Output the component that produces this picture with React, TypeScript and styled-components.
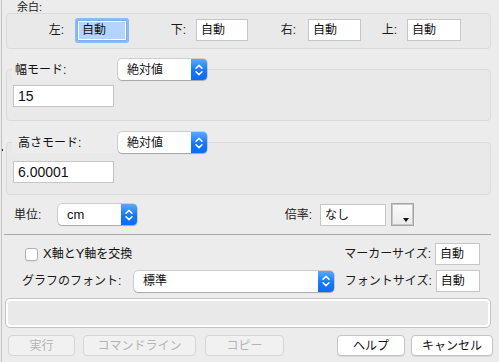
import React from 'react';
import styled, { createGlobalStyle } from 'styled-components';

const GlobalStyle = createGlobalStyle`
  html, body {
    margin: 0;
    padding: 0;
    background: #ececec;
  }
  body {
    font-family: "Liberation Sans", "Noto Sans CJK JP", sans-serif;
    font-size: 12px;
    color: #111;
  }
  * { box-sizing: border-box; }
`;

const Window = styled.div`
  position: relative;
  width: 498px;
  height: 362px;
  margin-left: 1px;
  border-left: 1px solid #c2c2c2;
  background: #ececec;
  display: flex;
  flex-direction: column;
  overflow: hidden;
`;

const EdgeMark = styled.span`
  position: absolute;
  left: -2px;
  top: 149px;
  width: 3px;
  height: 2px;
  background: #222;
`;

const SectionTitle = styled.div`
  height: 13px;
  line-height: 14px;
  padding-left: 15px;
  font-size: 11px;
  color: #222;
`;

const GroupBox = styled.div<{ $top: number; $padTop: number; $padBottom: number }>`
  margin: ${p => p.$top}px 8px 0 4px;
  padding: ${p => p.$padTop}px 6px ${p => p.$padBottom}px 0;
  border: 1px solid #dadada;
  border-radius: 4px;
  background: #e9e9e9;
`;

const MarginRow = styled.div`
  display: flex;
  align-items: center;
  height: 22px;
`;

const FieldLabel = styled.span<{ $w: number; $gap?: number; $align?: string }>`
  display: inline-block;
  width: ${p => p.$w}px;
  margin-right: ${p => p.$gap ?? 11}px;
  text-align: ${p => p.$align ?? 'right'};
  line-height: 16px;
  white-space: nowrap;
  color: #1a1a1a;
`;

const TextInput = styled.div<{ $w: number; $size?: number }>`
  width: ${p => p.$w}px;
  height: 22px;
  background: #fff;
  border: 1px solid #c6c6c6;
  padding-left: 4px;
  display: flex;
  align-items: center;
  font-size: ${p => p.$size ?? 12}px;
  line-height: 16px;
  color: #111;
  white-space: nowrap;
`;

const FocusInput = styled.div`
  width: 50px;
  height: 21px;
  margin-left: 1px;
  border: 1px solid #7aaef0;
  box-shadow: 0 0 0 2px #8cbaf3;
  border-radius: 1px;
  background: #fff;
  padding: 1px;
  display: flex;
`;

const Selection = styled.span`
  flex: 1;
  background: #b3d4fc;
  padding-left: 3px;
  display: flex;
  align-items: center;
  line-height: 16px;
`;

const Header = styled.div`
  display: flex;
  align-items: center;
  height: 21px;
  margin-top: -11px;
  position: relative;
`;

const Legend = styled.span<{ $pad: number }>`
  display: flex;
  align-items: center;
  height: 21px;
  width: 106px;
  margin-left: 5px;
  padding-left: ${p => p.$pad}px;
  background: #ececec;
  line-height: 16px;
`;

const InputHolder = styled.div<{ $top: number }>`
  margin: ${p => p.$top}px 0 0 6px;
`;

const SelectBox = styled.div<{ $w: number }>`
  width: ${p => p.$w}px;
  height: 21px;
  display: flex;
  border-radius: 4px;
  background: #fff;
  box-shadow: 0 0 0 0.5px rgba(0, 0, 0, 0.25), 0 1px 1px rgba(0, 0, 0, 0.18);
`;

const SelectText = styled.span<{ $size?: number }>`
  flex: 1;
  padding-left: 9px;
  display: flex;
  align-items: center;
  font-size: ${p => p.$size ?? 12}px;
  line-height: 16px;
  color: #111;
`;

const Stepper = styled.span`
  width: 16px;
  border-radius: 0 4px 4px 0;
  background: linear-gradient(#5aa9ff, #1478fb 55%, #0b6cf7);
  display: flex;
  align-items: center;
  justify-content: center;
`;

const Row = styled.div<{ $top: number; $h: number; $left?: number; $right?: number }>`
  display: flex;
  align-items: center;
  height: ${p => p.$h}px;
  margin-top: ${p => p.$top}px;
  padding-left: ${p => p.$left ?? 0}px;
  padding-right: ${p => p.$right ?? 0}px;
`;

const ColorButton = styled.div`
  width: 23px;
  height: 23px;
  margin-left: 5px;
  border: 1px solid #a5a5a5;
  box-shadow: inset 0 0 0 1px #c8c8c8;
  background: linear-gradient(#fbfbfb, #ebebeb);
  display: flex;
  align-items: flex-end;
  justify-content: flex-end;
  padding: 0 4px 3px 0;
  line-height: 0;
`;

const Separator = styled.div`
  height: 1px;
  margin: 8px 8px 0 2px;
  background: #a8a8a8;
`;

const Left = styled.div`
  display: flex;
  align-items: center;
  flex: 1;
`;

const CheckBox = styled.span`
  width: 13px;
  height: 13px;
  border: 1px solid #b2b2b2;
  border-radius: 3px;
  background: #fff;
  box-shadow: 0 1px 1px rgba(0, 0, 0, 0.06);
  margin-right: 5px;
`;

const PlainText = styled.span`
  line-height: 16px;
  white-space: nowrap;
  color: #111;
`;

const Latin = styled.span`
  font-size: 13px;
`;

const StatusBox = styled.div`
  height: 30px;
  margin: 6px 8px 0 3px;
  border: 1px solid #c4c4c4;
  border-radius: 5px;
  box-shadow: inset 0 0 0 2px #fff;
  background: #e9e9e9;
`;

const ButtonBar = styled.div`
  display: flex;
  align-items: center;
  height: 21px;
  margin: 7px 6px 0 6px;
`;

const Spacer = styled.div`
  flex: 1;
`;

const PushButton = styled.button<{ $w: number; $gap?: number; $disabled?: boolean }>`
  width: ${p => p.$w}px;
  height: 21px;
  margin-left: ${p => p.$gap ?? 0}px;
  padding: 0;
  border-radius: 4px;
  font-family: inherit;
  font-size: 12px;
  line-height: 16px;
  border: 1px solid ${p => (p.$disabled ? '#d6d6d6' : '#c3c3c3')};
  background: ${p => (p.$disabled ? '#f1f1f1' : '#fff')};
  color: ${p => (p.$disabled ? '#b4b4b4' : '#111')};
  box-shadow: ${p => (p.$disabled ? 'none' : '0 1px 0 rgba(0,0,0,0.08)')};
`;

const Chevrons = () => (
  <svg width="10" height="14" viewBox="0 0 10 14">
    <path d="M2 5.2 L5 2.4 L8 5.2" fill="none" stroke="#fff" strokeWidth="1.5" strokeLinecap="round" strokeLinejoin="round" />
    <path d="M2 8.8 L5 11.6 L8 8.8" fill="none" stroke="#fff" strokeWidth="1.5" strokeLinecap="round" strokeLinejoin="round" />
  </svg>
);

const Select: React.FC<{ w: number; value: string; size?: number }> = ({ w, value, size }) => (
  <SelectBox $w={w}>
    <SelectText $size={size}>{value}</SelectText>
    <Stepper>
      <Chevrons />
    </Stepper>
  </SelectBox>
);

const DownTriangle = () => (
  <svg width="6" height="4" viewBox="0 0 6 4">
    <path d="M0 0 H6 L3 4 Z" fill="#111" />
  </svg>
);

const App: React.FC = () => {
  return (
    <>
      <GlobalStyle />
      <Window>
        <EdgeMark />
        <SectionTitle>余白:</SectionTitle>
        <GroupBox $top={0} $padTop={5} $padBottom={7}>
          <MarginRow>
            <FieldLabel $w={57} $gap={12}>左:</FieldLabel>
            <FocusInput>
              <Selection>自動</Selection>
            </FocusInput>
            <FieldLabel $w={59} $gap={10}>下:</FieldLabel>
            <TextInput $w={52}>自動</TextInput>
            <FieldLabel $w={48} $gap={12}>右:</FieldLabel>
            <TextInput $w={53}>自動</TextInput>
            <FieldLabel $w={36} $gap={10}>上:</FieldLabel>
            <TextInput $w={54}>自動</TextInput>
          </MarginRow>
        </GroupBox>

        <GroupBox $top={20} $padTop={0} $padBottom={13}>
          <Header>
            <Legend $pad={3}>幅モード:</Legend>
            <Select w={89} value="絶対値" />
          </Header>
          <InputHolder $top={5}>
            <TextInput $w={101} $size={14}>15</TextInput>
          </InputHolder>
        </GroupBox>

        <GroupBox $top={21} $padTop={0} $padBottom={11}>
          <Header>
            <Legend $pad={6}>高さモード:</Legend>
            <Select w={89} value="絶対値" />
          </Header>
          <InputHolder $top={8}>
            <TextInput $w={101} $size={14}>6.00001</TextInput>
          </InputHolder>
        </GroupBox>

        <Row $top={8} $h={23} $left={12}>
          <FieldLabel $w={44} $gap={0} $align="left">単位:</FieldLabel>
          <Select w={79} value="cm" size={13} />
          <FieldLabel $w={175} $gap={8}>倍率:</FieldLabel>
          <TextInput $w={66}>なし</TextInput>
          <ColorButton>
            <DownTriangle />
          </ColorButton>
        </Row>

        <Separator />

        <Row $top={8} $h={22} $left={23} $right={19}>
          <Left>
            <CheckBox />
            <PlainText>
              <Latin>X</Latin>軸と<Latin>Y</Latin>軸を交換
            </PlainText>
          </Left>
          <FieldLabel $w={100} $gap={4}>マーカーサイズ:</FieldLabel>
          <TextInput $w={45}>自動</TextInput>
        </Row>

        <Row $top={5} $h={22} $left={20} $right={19}>
          <Left>
            <FieldLabel $w={112} $gap={0} $align="left">グラフのフォント:</FieldLabel>
            <Select w={200} value="標準" />
          </Left>
          <FieldLabel $w={100} $gap={4}>フォントサイズ:</FieldLabel>
          <TextInput $w={45}>自動</TextInput>
        </Row>

        <StatusBox />

        <ButtonBar>
          <PushButton $w={67} $disabled>実行</PushButton>
          <PushButton $w={113} $gap={8} $disabled>コマンドライン</PushButton>
          <PushButton $w={79} $gap={9} $disabled>コピー</PushButton>
          <Spacer />
          <PushButton $w={68}>ヘルプ</PushButton>
          <PushButton $w={82} $gap={6}>キャンセル</PushButton>
        </ButtonBar>
      </Window>
    </>
  );
};

export default App;
